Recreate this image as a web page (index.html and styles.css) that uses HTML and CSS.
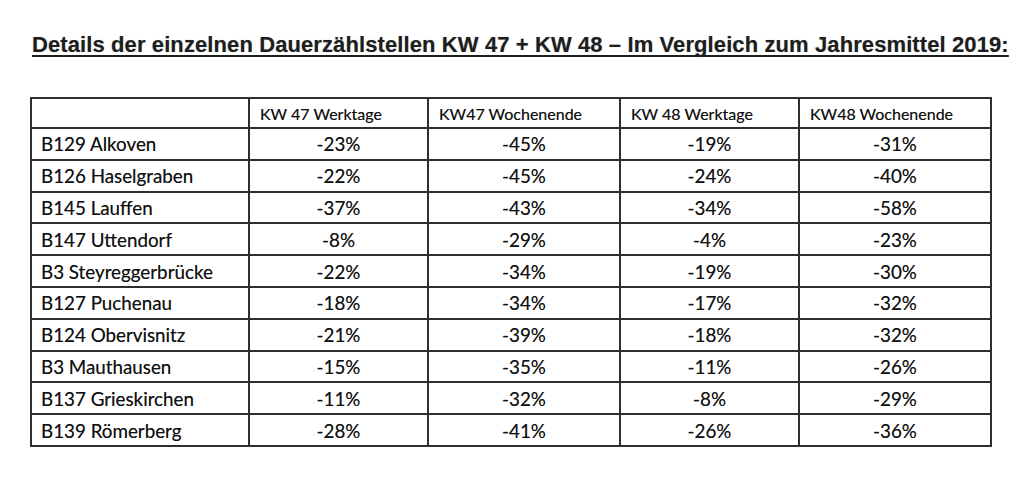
FILE: index.html
```
<!DOCTYPE html>
<html lang="de">
<head>
<meta charset="utf-8">
<title>Dauerzählstellen</title>
<link rel="stylesheet" href="styles.css">
</head>
<body>
<div class="page">
  <h1 class="title">Details der einzelnen Dauerzählstellen KW 47 + KW 48 – Im Vergleich zum Jahresmittel 2019:</h1>
  <table class="data">
    <colgroup>
      <col class="c1"><col class="c2"><col class="c3"><col class="c4"><col class="c5">
    </colgroup>
    <thead>
      <tr class="head"><th></th><th>KW 47 Werktage</th><th>KW47 Wochenende</th><th>KW 48 Werktage</th><th>KW48 Wochenende</th></tr>
    </thead>
    <tbody>
      <tr><td>B129 Alkoven</td><td>-23%</td><td>-45%</td><td>-19%</td><td>-31%</td></tr>
      <tr><td>B126 Haselgraben</td><td>-22%</td><td>-45%</td><td>-24%</td><td>-40%</td></tr>
      <tr><td>B145 Lauffen</td><td>-37%</td><td>-43%</td><td>-34%</td><td>-58%</td></tr>
      <tr><td>B147 Uttendorf</td><td>-8%</td><td>-29%</td><td>-4%</td><td>-23%</td></tr>
      <tr><td>B3 Steyreggerbrücke</td><td>-22%</td><td>-34%</td><td>-19%</td><td>-30%</td></tr>
      <tr><td>B127 Puchenau</td><td>-18%</td><td>-34%</td><td>-17%</td><td>-32%</td></tr>
      <tr><td>B124 Obervisnitz</td><td>-21%</td><td>-39%</td><td>-18%</td><td>-32%</td></tr>
      <tr><td>B3 Mauthausen</td><td>-15%</td><td>-35%</td><td>-11%</td><td>-26%</td></tr>
      <tr><td>B137 Grieskirchen</td><td>-11%</td><td>-32%</td><td>-8%</td><td>-29%</td></tr>
      <tr><td>B139 Römerberg</td><td>-28%</td><td>-41%</td><td>-26%</td><td>-36%</td></tr>
    </tbody>
  </table>
</div>
</body>
</html>
```
FILE: styles.css
```
html, body {
  margin: 0;
  padding: 0;
  background: #ffffff;
}
.page {
  padding: 31px 0 0 30px;
}
.title {
  margin: 0 0 38px 2px;
  font-family: "Liberation Sans", Arial, sans-serif;
  font-weight: bold;
  font-size: 22px;
  letter-spacing: 0.1px;
  line-height: 28px;
  color: #1e1e1e;
  text-decoration: underline;
  text-decoration-thickness: 2px;
  text-underline-offset: 3px;
  text-decoration-skip-ink: none;
  text-shadow: 0 0 1px rgba(0,0,0,0.35);
  white-space: nowrap;
}
.data {
  border-collapse: collapse;
  table-layout: fixed;
  width: 962px;
  font-family: Lato, "Open Sans", sans-serif;
  color: #111111;
}
.c1 { width: 218px; }
.c2 { width: 179px; }
.c3 { width: 192px; }
.c4 { width: 179px; }
.c5 { width: 192px; }
.data th, .data td {
  border: 2px solid #2e2e2e;
  padding: 0;
  text-align: center;
  vertical-align: middle;
  text-shadow: 0 0 0.6px rgba(0,0,0,0.5);
}
.data th {
  font-weight: normal;
  font-size: 16px;
  height: 28px;
  text-align: left;
  padding-left: 10px;
}
.data td {
  font-size: 18.8px;
  height: 29.8px;
}
.data td:first-child {
  text-align: left;
  padding-left: 9px;
}
```
